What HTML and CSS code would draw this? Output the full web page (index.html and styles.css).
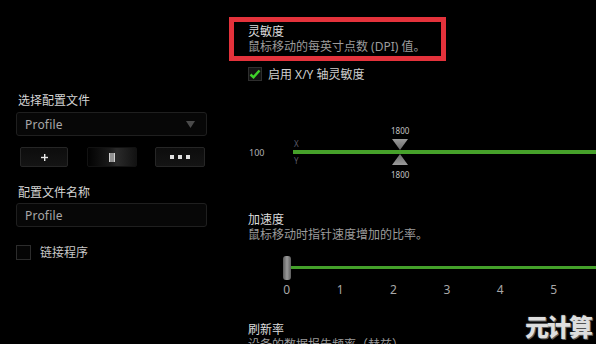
FILE: index.html
```html
<!DOCTYPE html>
<html lang="zh-CN">
<head>
<meta charset="utf-8">
<title>灵敏度设置</title>
<link rel="stylesheet" href="styles.css">
</head>
<body>
<div class="app">
  <aside class="left">
    <div class="label">选择配置文件</div>
    <div class="select">
      <span class="val">Profile</span>
      <svg class="caret" width="9" height="7" viewBox="0 0 9 7"><polygon points="0,0 9,0 4.5,7" fill="#4a4a4a"/></svg>
    </div>
    <div class="btns">
      <div class="btn b1">
        <svg width="7" height="7" viewBox="0 0 7 7"><rect x="3" y="0" width="1.4" height="7" fill="#e8e8e8"/><rect x="0" y="2.8" width="7" height="1.4" fill="#e8e8e8"/></svg>
      </div>
      <div class="btn b2">
        <svg width="6" height="9" viewBox="0 0 6 9"><rect x="0" y="0" width="6" height="9" fill="#cfcfcf"/><rect x="1.5" y="0" width="1" height="9" fill="#555"/><rect x="3.5" y="0" width="1" height="9" fill="#555"/></svg>
      </div>
      <div class="btn b3">
        <svg width="20" height="4" viewBox="0 0 20 4"><rect x="0" y="0" width="4" height="4" fill="#e0e0e0"/><rect x="8" y="0" width="4" height="4" fill="#e0e0e0"/><rect x="16" y="0" width="4" height="4" fill="#e0e0e0"/></svg>
      </div>
    </div>
    <div class="label label2">配置文件名称</div>
    <div class="input"><span class="val">Profile</span></div>
    <div class="link-row">
      <span class="box"></span>
      <span class="link-text">链接程序</span>
    </div>
  </aside>

  <main class="right">
    <section class="dpi-box">
      <div class="title">灵敏度</div>
      <div class="sub">鼠标移动的每英寸点数 (DPI) 值。</div>
    </section>

    <div class="check-row">
      <span class="check">
        <svg width="12" height="10" viewBox="0 0 12 10"><polyline points="1.5,5.5 4.5,8.2 10.5,1.5" fill="none" stroke="#3fd12a" stroke-width="2.4"/></svg>
      </span>
      <span class="check-text">启用 X/Y 轴灵敏度</span>
    </div>

    <div class="dpi-slider">
      <span class="min">100</span>
      <div class="track">
        <span class="axis ax-x">X</span>
        <span class="axis ax-y">Y</span>
        <div class="line"></div>
        <div class="marker">
          <span class="mval top">1800</span>
          <svg class="tri down" width="16" height="11" viewBox="0 0 16 11"><defs><linearGradient id="g1" x1="0" y1="0" x2="0" y2="1"><stop offset="0" stop-color="#9a9a9a"/><stop offset="1" stop-color="#6a6a6a"/></linearGradient></defs><polygon points="0,0 16,0 8,11" fill="url(#g1)"/></svg>
          <svg class="tri up" width="16" height="11" viewBox="0 0 16 11"><defs><linearGradient id="g2" x1="0" y1="1" x2="0" y2="0"><stop offset="0" stop-color="#9a9a9a"/><stop offset="1" stop-color="#6a6a6a"/></linearGradient></defs><polygon points="0,11 16,11 8,0" fill="url(#g2)"/></svg>
          <span class="mval bottom">1800</span>
        </div>
      </div>
    </div>

    <section class="accel">
      <div class="title">加速度</div>
      <div class="sub">鼠标移动时指针速度增加的比率。</div>
      <div class="accel-slider">
        <div class="aline"></div>
        <div class="handle"></div>
      </div>
      <div class="ticks">
        <span>0</span><span>1</span><span>2</span><span>3</span><span>4</span><span>5</span>
      </div>
    </section>

    <section class="rate">
      <div class="title">刷新率</div>
      <div class="sub">设备的数据报告频率（赫兹）。</div>
    </section>
  </main>

  <div class="watermark">元计算</div>
</div>
</body>
</html>
```

FILE: styles.css
```css
* { box-sizing: border-box; }
html, body {
  margin: 0;
  padding: 0;
  background: #000;
  width: 596px;
  height: 344px;
  overflow: hidden;
}
body {
  font-family: "Noto Sans", "Noto Sans CJK SC", sans-serif;
  font-size: 12px;
  line-height: 15px;
  color: #cfcfcf;
}
.app {
  display: flex;
  height: 344px;
  position: relative;
  overflow: hidden;
}

/* left */
.left {
  width: 229px;
  flex: none;
  padding: 93px 0 0 16px;
  display: flex;
  flex-direction: column;
  align-items: flex-start;
}
.label {
  margin-left: 2px;
  color: #d4d4d4;
}
.select, .input {
  width: 191px;
  height: 24px;
  border: 1px solid #1f1f1f;
  border-radius: 3px;
  background: #070707;
  display: flex;
  align-items: center;
  padding: 0 8px;
  color: #a8a8a8;
  font-size: 12px;
}
.select {
  margin-top: 4px;
  justify-content: space-between;
}
.val { letter-spacing: 0.2px; }
.caret { margin-right: 3px; }
.btns {
  margin-top: 11px;
  margin-left: 4px;
  width: 185px;
  height: 20px;
  display: flex;
  justify-content: space-between;
}
.btn {
  height: 20px;
  border: 1px solid #262626;
  border-radius: 2px;
  background: linear-gradient(#0d0d0d, #141414);
  display: flex;
  align-items: center;
  justify-content: center;
}
.b1 { width: 48px; }
.b2 {
  width: 50px;
  border-color: #121212;
  background: linear-gradient(90deg, #020202 0%, #1a1a1a 45%, #2a2a2a 60%, #121212 100%);
}
.b3 { width: 50px; }
.label2 { margin-top: 18px; }
.input { margin-top: 3px; }
.link-row {
  margin-top: 18px;
  display: flex;
  align-items: center;
  height: 15px;
}
.box {
  width: 15px;
  height: 15px;
  border: 1px solid #2c2c2c;
  background: #050505;
}
.link-text {
  margin-left: 9px;
  color: #c8c8c8;
}

/* right */
.right {
  flex: 1;
  padding-top: 17px;
  display: flex;
  flex-direction: column;
  align-items: flex-start;
}
.title { color: #dcdcdc; }
.sub { color: #9c9c9c; }
.dpi-box {
  width: 217px;
  height: 44px;
  border: 5px solid #e4323b;
  padding: 2px 0 2px 14px;
}
.check-row {
  margin-top: 6px;
  margin-left: 19px;
  height: 14px;
  display: flex;
  align-items: center;
}
.check {
  width: 14px;
  height: 14px;
  background: #141414;
  border: 1px solid #2e2e2e;
  display: flex;
  align-items: center;
  justify-content: center;
}
.check-text {
  margin-left: 6px;
  color: #cfcfcf;
}
.dpi-slider {
  margin-top: 44px;
  margin-left: 20px;
  width: 347px;
  height: 55px;
  display: flex;
  align-items: center;
}
.min {
  width: 44px;
  font-size: 9px;
  color: #b0b0b0;
}
.track {
  flex: 1;
  height: 55px;
  position: relative;
}
.line {
  position: absolute;
  left: 0;
  right: 0;
  top: 25px;
  height: 4px;
  background: #46a02a;
}
.axis {
  position: absolute;
  left: 1px;
  font-size: 8px;
  line-height: 9px;
  color: #5a5a6a;
}
.ax-x { top: 14px; }
.ax-y { top: 31px; }
.marker {
  position: absolute;
  left: 99px;
  top: 0;
  width: 16px;
  height: 55px;
}
.mval {
  position: absolute;
  left: -1px;
  font-size: 8px;
  line-height: 9px;
  color: #c4c4c4;
}
.mval.top { top: 1px; }
.mval.bottom { top: 45px; }
.tri { position: absolute; left: 0; display: block; }
.tri.down { top: 14px; }
.tri.up { top: 29px; }

.accel {
  margin-top: 32px;
  padding-left: 19px;
  width: 367px;
}
.accel-slider {
  margin-top: 14px;
  height: 24px;
  position: relative;
}
.aline {
  position: absolute;
  left: 41px;
  right: 0;
  top: 10px;
  height: 3px;
  background: #44a02a;
}
.handle {
  position: absolute;
  left: 35px;
  top: 0;
  width: 8px;
  height: 24px;
  border-radius: 3px;
  background: linear-gradient(90deg, #5a5a5a, #9a9a9a 50%, #5e5e5e);
}
.ticks {
  margin-top: 2px;
  margin-left: 12px;
  display: grid;
  grid-template-columns: repeat(6, 53.4px);
  color: #a8a8a8;
}
.ticks span { text-align: center; }
.rate {
  margin-top: 25px;
  padding-left: 19px;
}
.watermark {
  position: absolute;
  right: 5px;
  bottom: 3px;
  font-family: "Noto Sans CJK SC", sans-serif;
  font-weight: 900;
  font-size: 24px;
  line-height: 30px;
  color: #dedede;
  letter-spacing: -2px;
  text-shadow: 0 0 2px #444, 1px 1px 0 #666;
}
```
